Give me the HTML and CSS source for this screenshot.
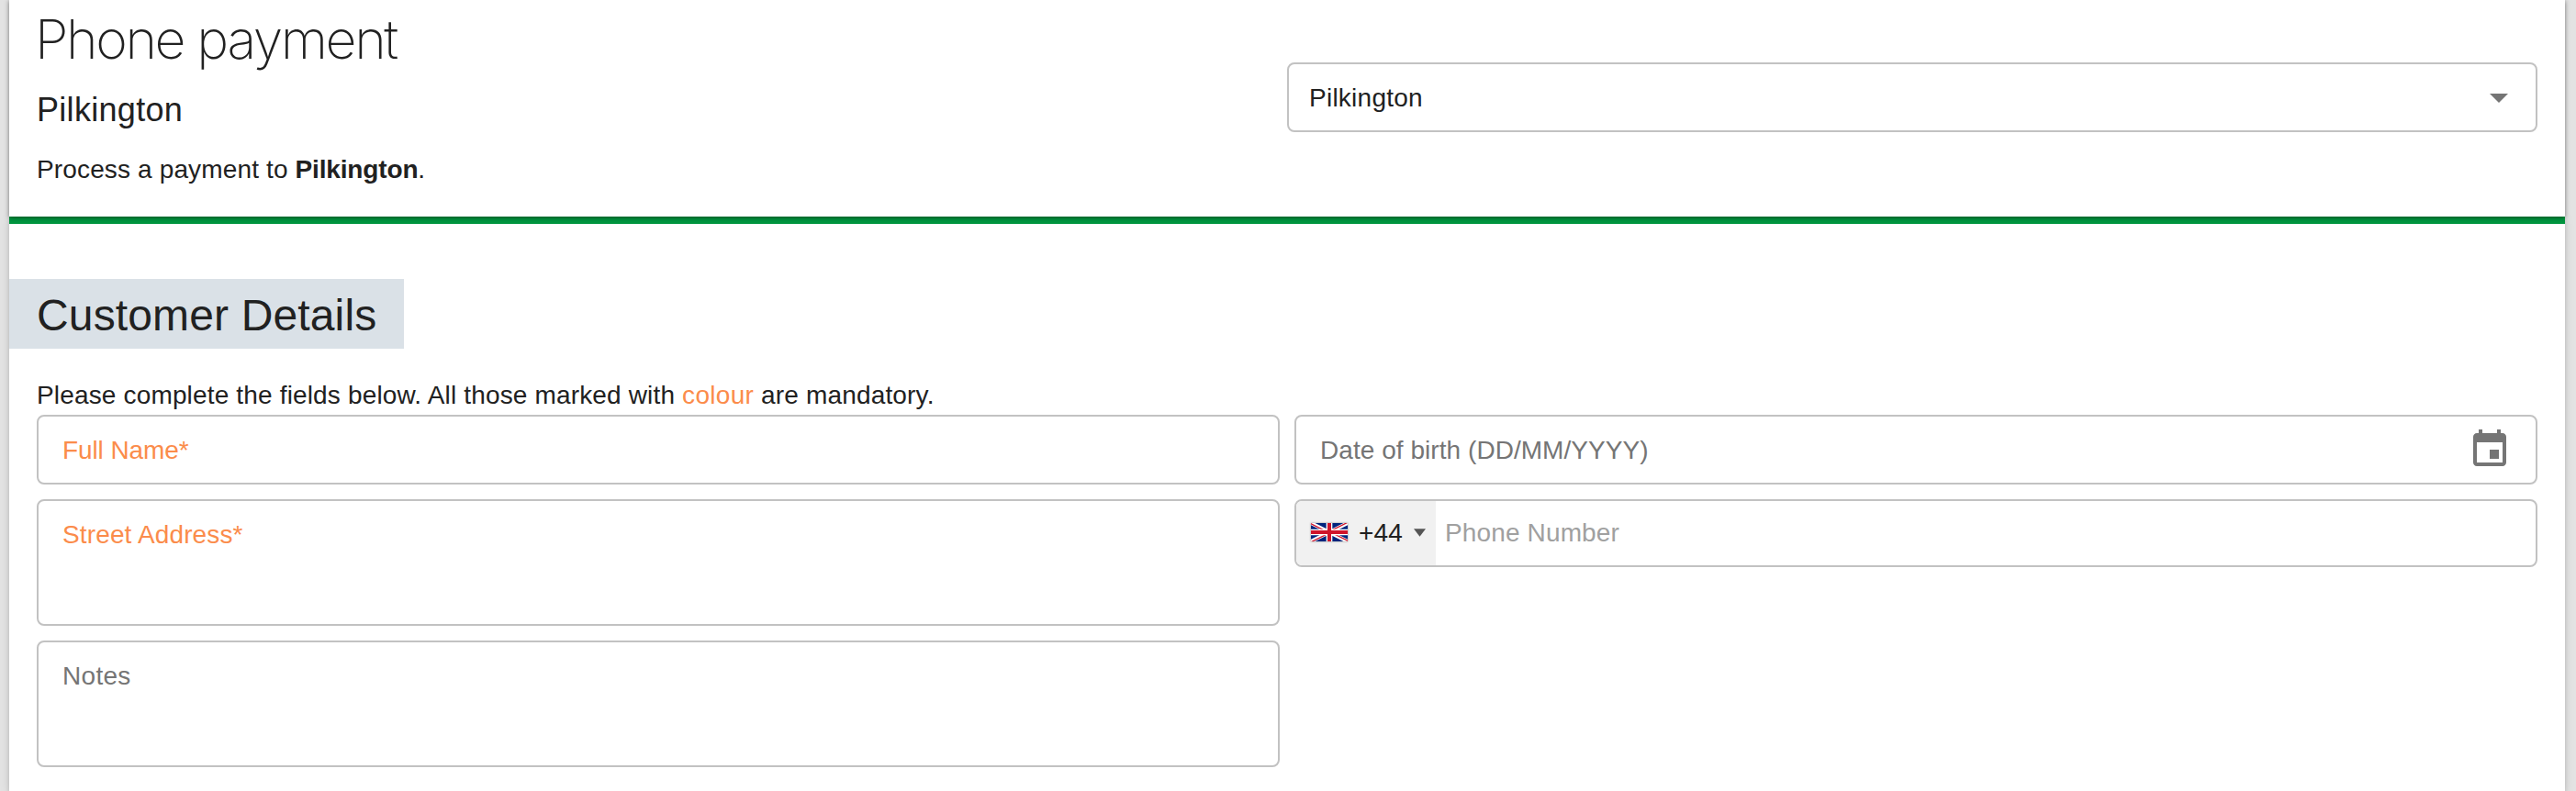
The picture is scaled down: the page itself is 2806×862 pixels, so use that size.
FILE: index.html
```html
<!DOCTYPE html>
<html lang="en">
<head>
    <meta charset="UTF-8">
    <meta name="viewport" content="width=device-width, initial-scale=1.0">
    <title>Phone payment</title>
    <link rel="stylesheet" href="styles.css">
</head>
<body>
    <header class="page-header">
        <div class="intro">
            <h1>Phone payment</h1>
            <h2>Pilkington</h2>
            <p>Process a payment to <strong>Pilkington</strong>.</p>
        </div>
        <div class="field select">
            <span>Pilkington</span>
            <svg class="arrow" viewBox="0 0 20 10"><path d="M0 0h20L10 10z"/></svg>
        </div>
    </header>

    <main class="details">
        <h3>Customer Details</h3>
        <p class="hint">Please complete the fields below. All those marked with <span class="mandatory">colour</span> are mandatory.</p>

        <form class="form-grid">
            <div class="field name">
                <label class="mandatory">Full Name*</label>
            </div>
            <div class="field date">
                <label>Date of birth (DD/MM/YYYY)</label>
                <svg class="calendar" viewBox="0 0 24 24"><path d="M17 12h-5v5h5v-5zM16 1v2H8V1H6v2H5c-1.11 0-1.99.9-1.99 2L3 19c0 1.1.89 2 2 2h14c1.1 0 2-.9 2-2V5c0-1.1-.9-2-2-2h-1V1h-2zm3 18H5V8h14v11z"/></svg>
            </div>
            <div class="field area">
                <label class="mandatory">Street Address*</label>
            </div>
            <div class="field phone">
                <div class="country">
                    <svg class="flag" viewBox="0 0 60 30">
                        <clipPath id="diagonals"><path d="M30 15h30v15zv15H0zH0V0zV0h30z"/></clipPath>
                        <path d="M0 0h60v30H0z" fill="#00247d"/>
                        <path d="M0 0l60 30M60 0L0 30" stroke="#fff" stroke-width="6"/>
                        <path d="M0 0l60 30M60 0L0 30" stroke="#cf142b" stroke-width="4" clip-path="url(#diagonals)"/>
                        <path d="M30 0v30M0 15h60" stroke="#fff" stroke-width="10"/>
                        <path d="M30 0v30M0 15h60" stroke="#cf142b" stroke-width="6"/>
                    </svg>
                    <span>+44</span>
                    <svg class="caret" viewBox="0 0 12 8"><path d="M0 0h12L6 8z"/></svg>
                </div>
                <label class="placeholder">Phone Number</label>
            </div>
            <div class="field area notes">
                <label>Notes</label>
            </div>
        </form>
    </main>
</body>
</html>
```

FILE: styles.css
```css
body {
    font-family: "Helvetica Neue", "Liberation Sans", Arial, sans-serif;
    font-size: 28px;
    line-height: 36px;
    letter-spacing: 0.14px;
    color: #212121;
    background-color: #e3e3e3;
    margin: 0;
    padding: 0 12px 0 10px;
    height: 862px;
    overflow: hidden;
    display: flex;
    flex-direction: column;
    box-sizing: border-box;
}
h1, h2, h3, p {
    margin: 0;
    font-weight: normal;
}
strong {
    letter-spacing: -0.15px;
}
.page-header, .details {
    background-color: white;
    box-shadow: 0 6px 2px -4px rgba(0, 0, 0, 0.2), 0 4px 4px rgba(0, 0, 0, 0.14), 0 2px 10px rgba(0, 0, 0, 0.12);
}
.page-header {
    display: flex;
    height: 236px;
    padding: 0 30px;
    box-sizing: border-box;
    box-shadow: 0 1px 5px rgba(0, 0, 0, 0.5);
    position: relative;
    z-index: 1;
    clip-path: inset(0 -10px -8px -10px);
}
.intro {
    width: 50%;
}
h1 {
    font-family: Inter, sans-serif;
    font-weight: 150;
    font-size: 59px;
    line-height: 72px;
    letter-spacing: -2.4px;
    margin-left: -2px;
    padding-top: 7px;
}
h2 {
    font-size: 36px;
    line-height: 44px;
    letter-spacing: 0.3px;
    margin: 19px 0 25px;
}
.field {
    display: flex;
    align-items: center;
    height: 76px;
    padding: 2px 26px 0;
    box-sizing: border-box;
    border: 2px solid #c2c2c2;
    border-radius: 8px;
    background-color: white;
    color: #757575;
}
.select {
    width: 50%;
    margin-top: 68px;
    padding: 2px 30px 0 22px;
    justify-content: space-between;
    color: #212121;
    letter-spacing: 0.25px;
}
.arrow {
    width: 20px;
    height: 10px;
    fill: #757575;
}
.details {
    flex: 1;
    padding: 60px 30px 0;
    border-top: 8px solid #00963f;
}
h3 {
    width: 370px;
    height: 72px;
    margin-left: -30px;
    padding: 4px 30px 0;
    font-size: 48px;
    line-height: 72px;
    white-space: nowrap;
    background-color: #dae1e7;
}
.hint {
    margin: 33px 0 3px;
    letter-spacing: 0.16px;
}
.mandatory {
    color: #fb8c4b;
}
.hint .mandatory {
    letter-spacing: 0.3px;
}
.form-grid {
    display: grid;
    grid-template-columns: 1fr 1fr;
    gap: 16px;
    align-items: start;
}
.name {
    letter-spacing: -0.1px;
}
.date {
    justify-content: space-between;
    letter-spacing: 0.05px;
}
.calendar {
    width: 48px;
    height: 48px;
    margin-top: -2px;
    fill: #757575;
}
.area {
    height: 138px;
    padding-top: 21px;
    align-items: flex-start;
    line-height: 32px;
}
.notes {
    letter-spacing: 0.3px;
}
.phone {
    height: 74px;
    padding: 0;
    overflow: hidden;
}
.country {
    display: flex;
    align-items: center;
    width: 152px;
    height: 100%;
    padding-left: 16px;
    box-sizing: border-box;
    background-color: #f1f1f1;
    color: #212121;
}
.flag {
    width: 40px;
    height: 20px;
    margin-right: 12px;
    margin-top: -2px;
    box-shadow: 0 0 2px #888;
}
.caret {
    width: 13px;
    height: 9px;
    margin-left: 12px;
    margin-top: -2px;
    fill: #555;
}
.placeholder {
    margin-left: 10px;
    color: #a0a0a0;
}
```
